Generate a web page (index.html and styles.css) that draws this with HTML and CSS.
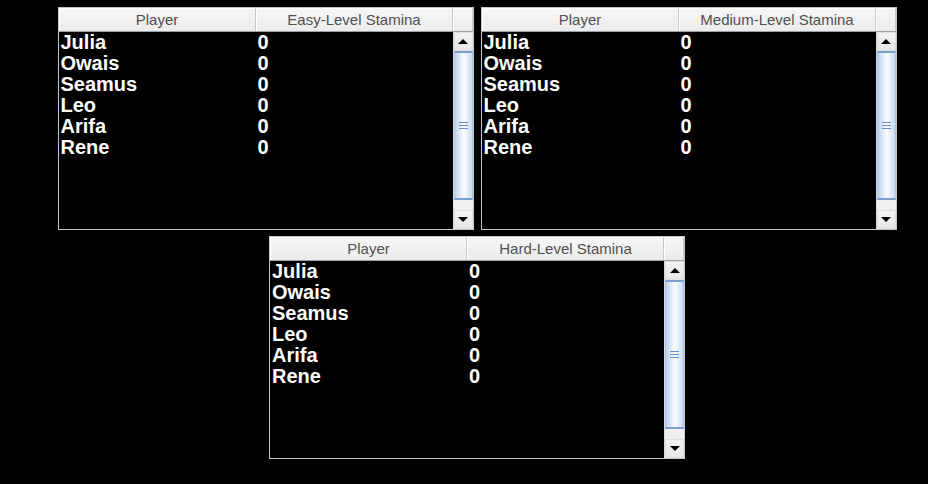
FILE: index.html
```html
<!DOCTYPE html>
<html>
<head>
<meta charset="utf-8">
<link rel="stylesheet" href="styles.css">
</head>
<body>
<div class="page">
  <div class="row">
    <div class="panel">
      <div class="head"><div class="hc">Player</div><div class="hc">Easy-Level Stamina</div><div class="hc corner"></div></div>
      <div class="main">
        <div class="rows">
          <div class="r"><span>Julia</span><span>0</span></div>
          <div class="r"><span>Owais</span><span>0</span></div>
          <div class="r"><span>Seamus</span><span>0</span></div>
          <div class="r"><span>Leo</span><span>0</span></div>
          <div class="r"><span>Arifa</span><span>0</span></div>
          <div class="r"><span>Rene</span><span>0</span></div>
        </div>
        <div class="sb">
          <div class="btn"><i class="up"></i></div>
          <div class="track"><div class="thumb"><i class="grip"></i></div></div>
          <div class="btn"><i class="down"></i></div>
        </div>
      </div>
    </div>
    <div class="panel">
      <div class="head"><div class="hc">Player</div><div class="hc">Medium-Level Stamina</div><div class="hc corner"></div></div>
      <div class="main">
        <div class="rows">
          <div class="r"><span>Julia</span><span>0</span></div>
          <div class="r"><span>Owais</span><span>0</span></div>
          <div class="r"><span>Seamus</span><span>0</span></div>
          <div class="r"><span>Leo</span><span>0</span></div>
          <div class="r"><span>Arifa</span><span>0</span></div>
          <div class="r"><span>Rene</span><span>0</span></div>
        </div>
        <div class="sb">
          <div class="btn"><i class="up"></i></div>
          <div class="track"><div class="thumb"><i class="grip"></i></div></div>
          <div class="btn"><i class="down"></i></div>
        </div>
      </div>
    </div>
  </div>
  <div class="row">
    <div class="panel">
      <div class="head"><div class="hc">Player</div><div class="hc">Hard-Level Stamina</div><div class="hc corner"></div></div>
      <div class="main">
        <div class="rows">
          <div class="r"><span>Julia</span><span>0</span></div>
          <div class="r"><span>Owais</span><span>0</span></div>
          <div class="r"><span>Seamus</span><span>0</span></div>
          <div class="r"><span>Leo</span><span>0</span></div>
          <div class="r"><span>Arifa</span><span>0</span></div>
          <div class="r"><span>Rene</span><span>0</span></div>
        </div>
        <div class="sb">
          <div class="btn"><i class="up"></i></div>
          <div class="track"><div class="thumb"><i class="grip"></i></div></div>
          <div class="btn"><i class="down"></i></div>
        </div>
      </div>
    </div>
  </div>
</div>
</body>
</html>
```
FILE: styles.css
```css
html, body {
  margin: 0;
  padding: 0;
  background: #000;
}
body {
  width: 928px;
  height: 484px;
  overflow: hidden;
  font-family: "Liberation Sans", Arial, sans-serif;
}
.page {
  display: flex;
  flex-direction: column;
  align-items: center;
  gap: 6px;
  padding: 7px 0 0 26px;
}
.row {
  display: flex;
  gap: 7px;
}
.panel {
  width: 416px;
  height: 223px;
  box-sizing: border-box;
  border: 1px solid #c4c8cc;
  display: flex;
  flex-direction: column;
  background: #000;
}
.head {
  display: flex;
  height: 24px;
  box-sizing: border-box;
  border-bottom: 1px solid #9aa0a8;
}
.hc {
  width: 197px;
  box-sizing: border-box;
  background: linear-gradient(#f6f6f6, #ebebeb);
  border-top: 1px solid #ffffff;
  border-left: 1px solid #ffffff;
  border-right: 1px solid #c4c8cc;
  color: #505050;
  font-size: 15px;
  line-height: 22px;
  text-align: center;
  white-space: nowrap;
}
.hc.corner {
  width: 20px;
  border-right: 1px solid #c4c8cc;
}
.main {
  flex: 1;
  display: flex;
  min-height: 0;
}
.rows {
  width: 394px;
}
.r {
  display: flex;
  height: 21px;
  line-height: 21px;
  color: #fff;
  font-weight: bold;
  font-size: 20px;
}
.r span {
  width: 197px;
  padding-left: 2px;
  box-sizing: border-box;
}
.sb {
  width: 20px;
  display: flex;
  flex-direction: column;
  background: #eeeeee;
  border-left: 1px solid #d8dce0;
  box-sizing: border-box;
}
.btn {
  height: 19px;
  display: flex;
  align-items: center;
  justify-content: center;
  background: linear-gradient(#f4f4f4, #e6e6e6);
  border: 1px solid #dcdfe2;
  box-sizing: border-box;
}
.up, .down {
  display: block;
  width: 0;
  height: 0;
  border-left: 5px solid transparent;
  border-right: 5px solid transparent;
}
.up { border-bottom: 5px solid #000; }
.down { border-top: 5px solid #000; }
.track {
  flex: 1;
  display: flex;
  flex-direction: column;
  padding-bottom: 10px;
  background: #f0f0f0;
}
.thumb {
  flex: 1;
  display: flex;
  align-items: center;
  justify-content: center;
  box-sizing: border-box;
  border-top: 2px solid #7f9ed0;
  border-bottom: 2px solid #7f9ed0;
  border-left: 1px solid #a9c1e3;
  border-right: 1px solid #a9c1e3;
  background: linear-gradient(90deg, #bcd2ec, #f2f7fd 45%, #f8fbff 55%, #c8daf0);
}
.grip {
  display: block;
  width: 9px;
  height: 7px;
  border-top: 1px solid #6d8ec4;
  border-bottom: 1px solid #6d8ec4;
  background: linear-gradient(transparent 2px, #6d8ec4 2px, #6d8ec4 3px, transparent 3px);
  box-sizing: border-box;
}
```
